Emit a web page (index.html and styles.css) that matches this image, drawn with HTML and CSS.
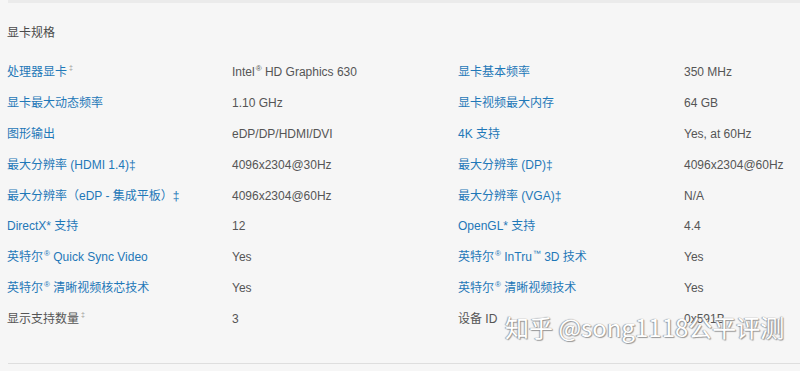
FILE: index.html
```html
<!DOCTYPE html>
<html lang="zh-CN">
<head>
<meta charset="utf-8">
<title>显卡规格</title>
<link rel="stylesheet" href="styles.css">
</head>
<body>
<div class="page">
  <div class="topbar"></div>
  <h2 class="title">显卡规格</h2>
  <div class="specs">
    <div class="lbl">处理器显卡<sup class="note">‡</sup></div><div class="val">Intel<sup class="reg">®</sup> HD Graphics 630</div>
    <div class="lbl">显卡基本频率</div><div class="val">350 MHz</div>

    <div class="lbl">显卡最大动态频率</div><div class="val">1.10 GHz</div>
    <div class="lbl">显卡视频最大内存</div><div class="val">64 GB</div>

    <div class="lbl">图形输出</div><div class="val">eDP/DP/HDMI/DVI</div>
    <div class="lbl">4K 支持</div><div class="val">Yes, at 60Hz</div>

    <div class="lbl">最大分辨率 (HDMI 1.4)‡</div><div class="val">4096x2304@30Hz</div>
    <div class="lbl">最大分辨率 (DP)‡</div><div class="val">4096x2304@60Hz</div>

    <div class="lbl">最大分辨率（eDP - 集成平板）‡</div><div class="val">4096x2304@60Hz</div>
    <div class="lbl">最大分辨率 (VGA)‡</div><div class="val">N/A</div>

    <div class="lbl">DirectX* 支持</div><div class="val">12</div>
    <div class="lbl">OpenGL* 支持</div><div class="val">4.4</div>

    <div class="lbl">英特尔<sup class="reg">®</sup> Quick Sync Video</div><div class="val">Yes</div>
    <div class="lbl">英特尔<sup class="reg">®</sup> InTru<sup class="reg">™</sup> 3D 技术</div><div class="val">Yes</div>

    <div class="lbl">英特尔<sup class="reg">®</sup> 清晰视频核芯技术</div><div class="val">Yes</div>
    <div class="lbl">英特尔<sup class="reg">®</sup> 清晰视频技术</div><div class="val">Yes</div>

    <div class="lbl plain">显示支持数量<sup class="note">‡</sup></div><div class="val">3</div>
    <div class="lbl plain">设备 ID</div><div class="val">0x591B</div>
  </div>
  <div class="bottomline"></div>
  <div class="watermark">知乎 @song1118公平评测</div>
</div>
</body>
</html>
```

FILE: styles.css
```css
html, body {
  margin: 0;
  padding: 0;
  background: #f6f6f6;
}
body {
  width: 800px;
  height: 371px;
  overflow: hidden;
  font-family: "Liberation Sans", "Noto Sans CJK SC", sans-serif;
  font-size: 12px;
  color: #555;
}
.page {
  position: relative;
  height: 371px;
}
.topbar {
  margin-left: 8px;
  height: 3px;
  background: #ebebeb;
}
.title {
  margin: 0;
  padding: 22px 0 0 7px;
  height: 17px;
  line-height: 17px;
  font-size: 12px;
  font-weight: normal;
  color: #4a4a4a;
}
.specs {
  display: grid;
  grid-template-columns: 225px 226px 226px 123px;
  grid-auto-rows: 30.9px;
  padding: 15px 0 0 7px;
  align-items: center;
}
.lbl {
  color: #1f78b8;
  line-height: 17px;
  height: 17px;
  white-space: nowrap;
}
.lbl.plain {
  color: #555;
}
.val {
  color: #555;
  line-height: 17px;
  height: 17px;
  white-space: nowrap;
}
.reg {
  font-size: 8px;
  vertical-align: top;
  line-height: 10px;
  margin-left: 1px;
}
.note {
  font-size: 7px;
  color: #999;
  vertical-align: top;
  line-height: 8px;
  margin-left: 2px;
}
.bottomline {
  position: absolute;
  left: 8px;
  right: 0;
  top: 363px;
  height: 1px;
  background: #dedede;
}
.watermark {
  position: absolute;
  left: 505px;
  top: 311px;
  font-family: "Noto Sans CJK SC", "Noto Sans", sans-serif;
  font-size: 24px;
  line-height: 32px;
  color: #ffffff;
  white-space: nowrap;
  text-shadow: 0 0 1px #888, 1px 1px 1px #999, -1px 0 1px #aaa;
}
```
